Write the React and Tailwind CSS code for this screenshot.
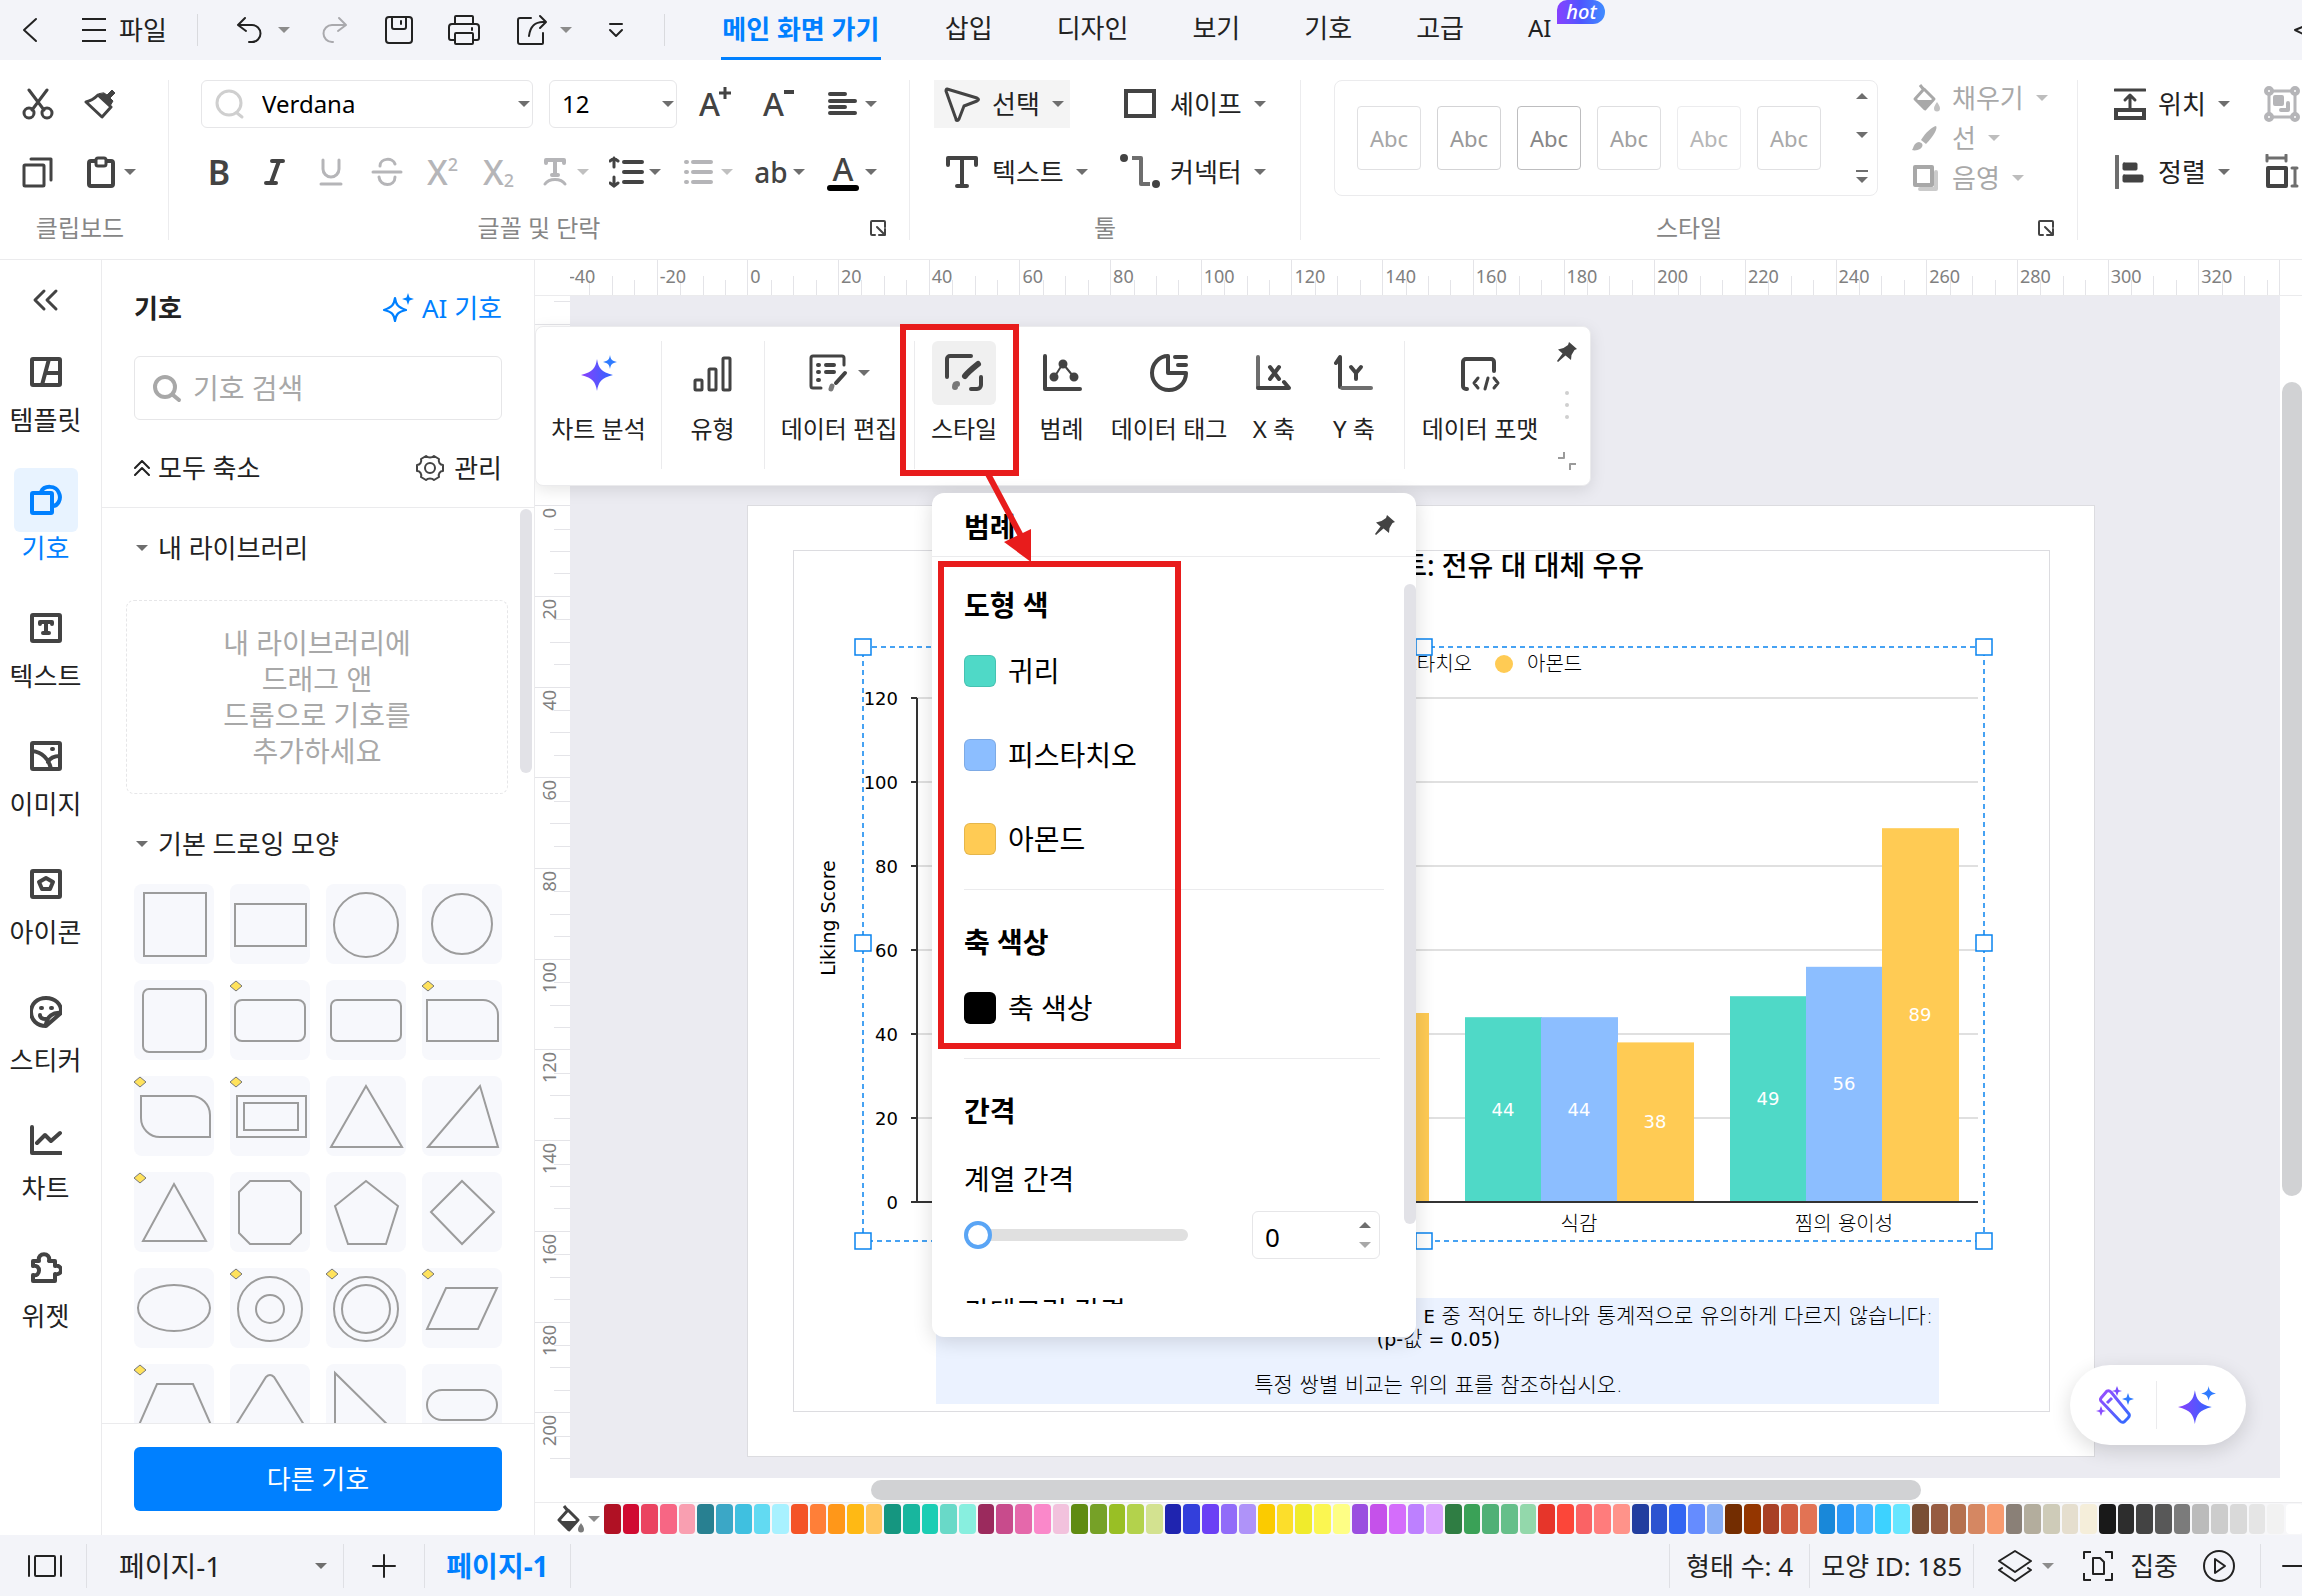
import { useState } from 'react';

const SWATCHES = [
  '#b01124', '#d00a31', '#ea4360', '#f76684', '#f99fb1',
  '#288091', '#3ba7c6', '#3fc0e0', '#62daf2', '#a8f1ff',
  '#f45427', '#ff7f38', '#ff9719', '#ffb914', '#ffc65f',
  '#159680', '#18b69e', '#1bcdb4', '#69d9c8', '#88efdf',
  '#9b2a5d', '#c84b8c', '#e568ab', '#fa88ca', '#f2c2dd',
  '#608b12', '#76a127', '#99bf25', '#b3d24c', '#d3e290',
  '#1f24af', '#333fdb', '#6b40f5', '#916cf9', '#af93f9',
  '#fbcb00', '#fcde2b', '#f0eb2c', '#fbf651', '#fefe85',
  '#9a4ee0', '#c551ea', '#d46dfb', '#bd80ff', '#dba3ff',
  '#2f7d43', '#3aa157', '#50b076', '#66bf8a', '#93d8ab',
  '#e6352a', '#fc4639', '#fa6365', '#ff7c7c', '#ff938a',
  '#223e9f', '#2c54d0', '#3366f2', '#658cff', '#89aef5',
  '#732d01', '#943600', '#a84025', '#d05c3f', '#e27354',
  '#1988d9', '#2b99f6', '#45b0ff', '#3dd2ff', '#67e6ff',
  '#794e35', '#965b41', '#b5714f', '#d58762', '#f79b70',
  '#8a8077', '#b3ad9d', '#cecbb8', '#e5dece', '#f5eeda',
  '#191919', '#2d2d2d', '#434343', '#585858', '#7b7b7b',
  '#bbbbbb', '#cccccc', '#d9d9d9', '#e5e5e5', '#f2f2f2', '#ffffff',
];

const TEAL = '#4fd9c7';
const BLUE = '#8cbeff';
const AMBER = '#ffcb54';

/* ---------- icons ---------- */

function Icon({ size = 32, box = 32, sw = 3, className = '', children }) {
  return (
    <svg
      width={size}
      height={size}
      viewBox={`0 0 ${box} ${box}`}
      fill="none"
      stroke="currentColor"
      strokeWidth={sw}
      strokeLinecap="round"
      strokeLinejoin="round"
      className={`shrink-0 ${className}`}
      aria-hidden="true"
    >
      {children}
    </svg>
  );
}

function Caret({ className = 'text-[#6e6e6e]', up = false }) {
  return (
    <svg width="12" height="8" viewBox="0 0 12 8" className={`shrink-0 ${className}`} aria-hidden="true">
      <path d={up ? 'M6 1L12 7H0Z' : 'M0 1H12L6 7Z'} fill="currentColor" />
    </svg>
  );
}

function Sparkle({ size = 36, id }) {
  return (
    <svg width={size} height={size} viewBox="0 0 36 36" className="shrink-0" aria-hidden="true">
      <defs>
        <linearGradient id={id} x1="0" y1="0.5" x2="1" y2="0.5">
          <stop offset="0" stopColor="#8a3ffc" />
          <stop offset="1" stopColor="#2f66ff" />
        </linearGradient>
      </defs>
      <path d="M16 4C17.5 13 20 17 32 20C20 23 17.5 27 16 36C14.500 27 12 23 0 20C12 17 14.500 13 16 4Z" fill={`url(#${id})`} />
      <path d="M29 0C29.700 4.500 31 6 36 7C31 8 29.700 9.500 29 14C28.300 9.500 27 8 22 7C27 6 28.300 4.500 29 0Z" fill="#2f7bff" />
    </svg>
  );
}

function Pin({ size = 22 }) {
  return (
    <svg width={size} height={size} viewBox="0 0 22 22" className="shrink-0 text-[#434343]" aria-hidden="true">
      <path d="M13 1L21 8L18.500 9L15.500 14L15 19L9.500 14.500L2 21L1 20L6.500 12.500L2 8.500L7.500 7L12 4Z" fill="currentColor" />
    </svg>
  );
}

const Bucket = ({ className = '', size = 28 }) => (
  <svg width={size} height={size} viewBox="0 0 28 28" className={`shrink-0 ${className}`} fill="none" stroke="currentColor" strokeWidth="3" strokeLinejoin="round" aria-hidden="true">
    <path d="M8 1L12 6M12 5L22 15L13 25L3 15Z" />
    <path d="M3 16H22L13 26Z" fill="currentColor" stroke="none" />
    <path d="M25 18C27 21 28 22.500 28 24.500A3 3 0 0 1 22 24.500C22 22.500 23 21 25 18Z" fill="currentColor" stroke="none" opacity="0.7" />
  </svg>
);

const LaunchIcon = () => (
  <button type="button" aria-label="자세히" className="text-[#434343]">
    <Icon size={18} box={18} sw={2}>
      <path d="M6 16H3a1 1 0 0 1-1-1V3a1 1 0 0 1 1-1h12a1 1 0 0 1 1 1v5M8 8l7 7M16 10v6h-6" />
    </Icon>
  </button>
);

/* ---------- title bar ---------- */

const TABS = ['삽입', '디자인', '보기', '기호', '고급'];

function TopBar() {
  return (
    <header className="flex h-[60px] shrink-0 items-center bg-[#f3f4f9] text-[#222]">
      <button type="button" aria-label="뒤로" className="ml-[18px]">
        <Icon size={26} box={26} sw={2}><path d="M18 2L6 13L18 24" /></Icon>
      </button>
      <button type="button" className="ml-[37px] flex items-center gap-3 text-[26px] leading-9">
        <Icon size={26} box={26} sw={2}><path d="M1 2H25M1 13H25M1 24H25" strokeLinecap="butt" /></Icon>
        파일
      </button>
      <div className="ml-[30px] h-8 w-px bg-[#d9dade]" />
      <button type="button" aria-label="실행 취소" className="ml-[38px] flex items-center gap-[14px]">
        <Icon size={28} box={28} sw={2}><path d="M9 2L2 9L10 15M3 9H16a8 8 0 0 1 0 17H13" /></Icon>
        <Caret className="text-[#8c8c8c]" />
      </button>
      <button type="button" aria-label="다시 실행" className="ml-[30px] text-[#a9a9ad]">
        <Icon size={28} box={28} sw={2}><path d="M19 2L26 9L18 15M25 9H12a8 8 0 0 0 0 17H13" /></Icon>
      </button>
      <button type="button" aria-label="저장" className="ml-[36px]">
        <Icon size={30} box={30} sw={2}>
          <rect x="2" y="2" width="26" height="26" rx="3" />
          <path d="M8 2V12a2 2 0 0 0 2 2H20a2 2 0 0 0 2-2V2M17 6V9" />
        </Icon>
      </button>
      <button type="button" aria-label="인쇄" className="ml-[34px]">
        <Icon size={32} box={32} sw={2}>
          <path d="M7 10V3a1 1 0 0 1 1-1H24a1 1 0 0 1 1 1V10M7 26H3a2 2 0 0 1-2-2V13a3 3 0 0 1 3-3H28a3 3 0 0 1 3 3V24a2 2 0 0 1-2 2H25M24 14V16" />
          <rect x="7" y="19" width="18" height="11" rx="1" />
        </Icon>
      </button>
      <button type="button" aria-label="내보내기" className="ml-[36px] flex items-center gap-3">
        <Icon size={32} box={32} sw={2}>
          <path d="M15 4H4a2 2 0 0 0-2 2V28a2 2 0 0 0 2 2H26a1 1 0 0 0 1-1V19M24 2L30 8L24 14M29 8C19 7 14 13 13 22" />
        </Icon>
        <Caret className="text-[#8c8c8c]" />
      </button>
      <button type="button" aria-label="더 보기" className="ml-[35px]">
        <Icon size={18} box={18} sw={2}><path d="M3 3H15M3 9L9 15L15 9" /></Icon>
      </button>
      <div className="ml-[39px] h-8 w-px bg-[#d9dade]" />
      <nav className="ml-14 flex h-full items-stretch gap-16 text-[26px] leading-9 whitespace-nowrap">
        <button type="button" className="flex min-w-40 items-center justify-center border-b-3 border-[#0080ff] pt-px font-bold text-[#0080ff]">메인 화면 가기</button>
        {TABS.map((t) => (
          <button key={t} type="button" className="pb-1">{t}</button>
        ))}
        <button type="button" className="flex items-start pb-1">
          <span className="self-center text-[24px]">AI</span>
          <span className="ml-[6px] h-6 w-12 rounded-tl-[10px] rounded-r-xl bg-gradient-to-r from-[#8640ff] via-[#4d55ff] to-[#3f8cff] text-center text-[20px] leading-6 font-medium text-white italic">hot</span>
        </button>
      </nav>
      <button type="button" aria-label="펼치기" className="ml-auto w-2 overflow-hidden">
        <Icon size={16} box={16} sw={2}><path d="M11 4L1 8L11 13" /></Icon>
      </button>
    </header>
  );
}

/* ---------- ribbon ---------- */

function RibbonGroup({ label, launcher = false, className, children }) {
  return (
    <section className={`flex flex-col pt-5 ${className}`}>
      {children}
      <div className="mt-4 flex h-8 items-center px-[22px]">
        {launcher && <span className="w-[18px]" />}
        <span className="flex-1 text-center text-[24px] leading-8 whitespace-nowrap text-[#868686]">{label}</span>
        {launcher && <LaunchIcon />}
      </div>
    </section>
  );
}

const Sep = () => <div className="mt-5 h-40 w-px shrink-0 bg-[#ececee]" />;

function DropIcon({ label, muted = false, children }) {
  return (
    <button type="button" aria-label={label} className={muted ? 'flex items-center gap-1.5 text-[#b5b5b8]' : 'flex items-center gap-1.5'}>
      <span className="flex w-8 justify-center">{children}</span>
      <Caret className={muted ? 'text-[#c0c0c0]' : 'text-[#6e6e6e]'} />
    </button>
  );
}

function FontGroup() {
  return (
    <RibbonGroup label="글꼴 및 단락" launcher className="w-[740px] shrink-0">
      <div className="flex h-12 items-center pl-8">
        <div className="relative flex h-12 w-[332px] items-center rounded-md border border-[#e6e6e8] pl-3">
          <Icon size={32} box={32} sw={3} className="text-[#cfcfcf]"><circle cx="15" cy="15" r="12" /><path d="M23 25L28 29" /></Icon>
          <select aria-label="글꼴" className="absolute inset-0 w-full appearance-none bg-transparent pl-[60px] text-[24px] text-black" defaultValue="Verdana">
            <option>Verdana</option>
          </select>
          <Caret className="pointer-events-none absolute right-0.5 text-[#6e6e6e]" />
        </div>
        <div className="relative ml-4 flex h-12 w-32 items-center rounded-md border border-[#e6e6e8]">
          <select aria-label="글꼴 크기" className="absolute inset-0 w-full appearance-none bg-transparent pl-3 text-[24px] text-black" defaultValue="12">
            <option>12</option>
          </select>
          <Caret className="pointer-events-none absolute right-0.5 text-[#6e6e6e]" />
        </div>
        <button type="button" aria-label="글꼴 크게" className="ml-[22px] flex w-8 items-start text-[32px] leading-9 font-medium">
          A<Icon size={14} box={14} sw={3} className="-ml-0.5"><path d="M7 1V13M1 7H13" strokeLinecap="butt" /></Icon>
        </button>
        <button type="button" aria-label="글꼴 작게" className="ml-8 flex w-8 items-start text-[32px] leading-9 font-medium">
          A<Icon size={12} box={12} sw={4} className="-ml-px"><path d="M1 6H11" strokeLinecap="butt" /></Icon>
        </button>
        <div className="ml-8 flex">
          <DropIcon label="맞춤">
            <Icon size={32} sw={4}><path d="M3 6H18M3 13H28M3 19H18M3 25H28" /></Icon>
          </DropIcon>
        </div>
      </div>
      <div className="mt-5 flex h-12 items-center pl-[34px]">
        <div className="flex gap-6 text-center text-[34px] leading-10">
          <button type="button" className="w-8 font-semibold">B</button>
          <button type="button" aria-label="기울임꼴" className="w-8"><Icon sw={4}><path d="M13 5H24M7 27H17M20 5L12 27" /></Icon></button>
          <button type="button" aria-label="밑줄" className="w-8 text-[#b5b5b8]"><Icon sw={3}><path d="M8 4V13a8 8 0 0 0 16 0V4M6 28H26" /></Icon></button>
          <button type="button" aria-label="취소선" className="w-8 text-[#b5b5b8]"><Icon sw={3}><path d="M24 8C22 1 9 2 9 10M24 21C24 31 9 31 8 21M2 16H30" /></Icon></button>
          <button type="button" aria-label="위 첨자" className="flex w-8 font-medium text-[#b5b5b8]">X<span className="text-[18px] leading-6">2</span></button>
          <button type="button" aria-label="아래 첨자" className="flex w-8 items-end font-medium text-[#b5b5b8]">X<span className="text-[18px] leading-6">2</span></button>
        </div>
        <div className="ml-6 flex gap-[22px]">
          <DropIcon label="텍스트 위치" muted>
            <Icon sw={4}><path d="M7 7V4H25V7M16 4V18M13 19H19" /><path d="M6 28C10 22 22 22 26 28" strokeWidth="3" /></Icon>
          </DropIcon>
          <DropIcon label="줄 간격">
            <svg width="36" height="32" viewBox="0 0 36 32" className="shrink-0" fill="none" stroke="currentColor" strokeLinecap="round">
              <path d="M15 6H33M15 16H33M15 26H33" strokeWidth="4" />
              <path d="M5 2V11M5 21V30M1 5L5 2L9 5M1 27L5 30L9 27" strokeWidth="3" />
            </svg>
          </DropIcon>
          <DropIcon label="목록" muted>
            <Icon sw={4}><path d="M10 6H28M10 16H28M10 26H28" /><path d="M3 6h1M3 16h1M3 26h1" /></Icon>
          </DropIcon>
          <DropIcon label="대소문자"><span className="text-[28px] leading-8 font-medium">ab</span></DropIcon>
          <DropIcon label="글꼴 색">
            <span className="flex flex-col items-center">
              <span className="text-[32px] leading-8 font-medium">A</span>
              <span className="h-1.5 w-8 rounded-sm bg-black" />
            </span>
          </DropIcon>
        </div>
      </div>
    </RibbonGroup>
  );
}

const ABC_TONES = [
  'border-[#e0e0e2] text-[#a6a6a6]',
  'border-[#d3d3d5] text-[#989898]',
  'border-[#bdbdbf] text-[#868686]',
  'border-[#dedee0] text-[#a0a0a0]',
  'border-[#ececee] text-[#b6b6b6]',
  'border-[#e0e0e2] text-[#a9a9a9]',
];

function Ribbon() {
  return (
    <div className="flex h-[200px] shrink-0 overflow-hidden border-b border-[#ebebed] bg-white text-[#434343]">
      <RibbonGroup label="클립보드" className="w-[168px] shrink-0 pr-2">
        <div className="flex h-12 items-center gap-[30px] pl-[22px]">
          <button type="button" aria-label="잘라내기">
            <Icon><path d="M7 2L22 22M25 2L10 22" /><circle cx="7" cy="25" r="5" /><circle cx="25" cy="25" r="5" /></Icon>
          </button>
          <button type="button" aria-label="서식 복사">
            <Icon><path d="M14 7L27 19L18 29L2 14C6 13 10 11 14 7Z" /><path d="M15 6L26 18L29 13L26 10L31 5L28 2L23 7L20 5Z" fill="currentColor" strokeWidth="1" /></Icon>
          </button>
        </div>
        <div className="mt-5 flex h-12 items-center gap-[30px] pl-[22px]">
          <button type="button" aria-label="복사">
            <Icon><path d="M9 3H29V24" /><rect x="2" y="9" width="20" height="21" rx="1" /></Icon>
          </button>
          <button type="button" aria-label="붙여넣기" className="flex items-center gap-2">
            <Icon sw={4}><rect x="5" y="5" width="24" height="25" rx="2" /><rect x="12" y="2" width="10" height="8" rx="2" fill="white" strokeWidth="3" /></Icon>
            <Caret />
          </button>
        </div>
      </RibbonGroup>
      <Sep />
      <FontGroup />
      <Sep />
      <RibbonGroup label="툴" className="w-[390px] shrink-0">
        <div className="grid grid-cols-[186px_auto] gap-y-5 pl-6 text-[26px] whitespace-nowrap text-[#222]">
          <button type="button" className="flex h-12 w-[136px] items-center bg-[#f4f4f4] pl-2.5">
            <Icon size={36} box={36} className="text-[#434343]"><path d="M3 3L33 12C35 13 35 14 33 15L20 20L15 33C14 35 12 35 12 33L2 5C2 4 2 3 3 3Z" /></Icon>
            <span className="mx-3">선택</span><Caret />
          </button>
          <button type="button" className="flex h-12 items-center">
            <Icon size={40} box={40} sw={4} className="text-[#434343]"><rect x="6" y="7" width="28" height="25" strokeLinejoin="miter" /></Icon>
            <span className="ml-2.5 mr-3">셰이프</span><Caret />
          </button>
          <button type="button" className="flex h-12 items-center pl-2.5">
            <Icon size={36} box={36} sw={4} className="text-[#434343]"><path d="M4 11V4H32V11M18 4V32M13 32H23" /></Icon>
            <span className="mx-3">텍스트</span><Caret />
          </button>
          <button type="button" className="flex h-12 items-center">
            <Icon size={40} box={40} sw={4} className="text-[#6e6e6e]">
              <path d="M12 6H21V32H30" strokeLinecap="butt" /><circle cx="4" cy="6" r="3" fill="#434343" stroke="#434343" strokeWidth="2" /><circle cx="36" cy="32" r="3" fill="#434343" stroke="#434343" strokeWidth="2" />
            </Icon>
            <span className="ml-2.5 mr-3">커넥터</span><Caret />
          </button>
        </div>
      </RibbonGroup>
      <Sep />
      <RibbonGroup label="스타일" launcher className="w-[776px] shrink-0">
        <div className="flex h-[116px] pl-[33px] whitespace-nowrap">
          <div className="flex w-[544px] items-center gap-4 rounded-lg border border-[#ebebed] pl-[22px]">
            {ABC_TONES.map((tone, i) => (
              <button key={i} type="button" className={`h-16 w-16 shrink-0 rounded border text-[22px] leading-8 ${tone}`}>Abc</button>
            ))}
            <div className="ml-auto flex flex-col items-center gap-[31px] pr-[9px]">
              <button type="button" aria-label="위로"><Caret up /></button>
              <button type="button" aria-label="아래로"><Caret /></button>
              <button type="button" aria-label="펼치기" className="flex flex-col items-center gap-1"><span className="h-0.5 w-3 bg-[#6e6e6e]" /><Caret /></button>
            </div>
          </div>
          <div className="ml-[34px] flex flex-col justify-between text-[26px] leading-9 text-[#a8a8a8]">
            <button type="button" className="flex h-9 items-center gap-3"><Bucket /><span>채우기</span><Caret className="text-[#bdbdbd]" /></button>
            <button type="button" className="flex h-9 items-center gap-3">
              <svg width="28" height="28" viewBox="0 0 28 28" fill="currentColor"><path d="M24 2C26 4 22 12 14 20L9 16C14 8 20 3 24 2ZM7 18C11 19 12 22 8 25C6 26 3 27 0 26C2 24 1 19 7 18Z" opacity="0.9" /></svg>
              <span>선</span><Caret className="text-[#bdbdbd]" />
            </button>
            <button type="button" className="flex h-9 items-center gap-3">
              <Icon size={28} box={28} sw={4}><path d="M24 8V25H8" opacity="0.6" /><rect x="3" y="3" width="17" height="18" fill="white" /></Icon>
              <span>음영</span><Caret className="text-[#bdbdbd]" />
            </button>
          </div>
        </div>
      </RibbonGroup>
      <Sep />
      <section className="flex shrink-0 flex-col gap-5 pt-5 pl-9 text-[26px] whitespace-nowrap text-[#222]">
        <div className="flex h-12 items-center">
          <button type="button" className="flex items-center">
            <Icon className="text-[#434343]"><path d="M1 2H31" /><path d="M16 8V20M11 12L16 7L21 12" /><rect x="2" y="22" width="28" height="8" strokeWidth="4" strokeLinejoin="miter" /></Icon>
            <span className="mx-3">위치</span><Caret />
          </button>
          <button type="button" aria-label="그룹" className="ml-[34px] text-[#b5b5b8]">
            <Icon size={36} box={36} sw={4}>
              <rect x="5" y="5" width="26" height="26" strokeWidth="3" /><circle cx="5" cy="5" r="3" fill="white" /><circle cx="31" cy="5" r="3" fill="white" /><circle cx="5" cy="31" r="3" fill="white" /><circle cx="31" cy="31" r="3" fill="white" />
              <rect x="11" y="11" width="7" height="7" fill="currentColor" /><path d="M24 17V24H17" />
            </Icon>
          </button>
        </div>
        <div className="flex h-12 items-center">
          <button type="button" className="flex items-center">
            <Icon size={34} box={34} className="text-[#434343]"><path d="M3 1V33" stroke="#6e6e6e" strokeWidth="4" /><rect x="9" y="8" width="14" height="7" rx="1" fill="currentColor" strokeWidth="1" /><rect x="9" y="20" width="20" height="7" rx="1" fill="currentColor" strokeWidth="1" /></Icon>
            <span className="mr-3 ml-2.5">정렬</span><Caret />
          </button>
          <button type="button" aria-label="크기" className="ml-[34px] text-[#434343]">
            <Icon size={36} box={36} sw={4}><rect x="4" y="14" width="18" height="18" /><path d="M3 4H22M3 1V7M22 1V7M31 14V32M28 14H33M28 32H33" stroke="#6e6e6e" strokeWidth="3" /></Icon>
          </button>
        </div>
      </section>
    </div>
  );
}

/* ---------- left rail ---------- */

const RAIL = [
  { label: '템플릿', icon: <><rect x="2" y="3" width="28" height="26" rx="1" /><path d="M19 3L12 29M16 17H30" /></> },
  { label: '기호', active: true, icon: <><path d="M11 8C14 1 26 1 29 9C32 16 27 22 23 22" /><rect x="2" y="9" width="20" height="20" rx="1" /></> },
  { label: '텍스트', icon: <><rect x="2" y="3" width="28" height="26" rx="1" /><path d="M10 12V10H22V12M16 10V21M13 21H19" /></> },
  { label: '이미지', icon: <><rect x="2" y="3" width="28" height="26" rx="1" /><path d="M2 11C12 12 19 19 21 29M18 22C20 18 25 16 30 16M22 9h1" /></> },
  { label: '아이콘', icon: <><rect x="2" y="3" width="28" height="26" rx="1" /><path d="M16 10L23 14L20 21H12L9 14Z" /></> },
  { label: '스티커', icon: <><path d="M31 17C32 8 25 2 16 2S1 8 1 16S7 30 16 30L31 17C24 16 16 20 16 30M16 23C12 23 10 22 10 19M11 12h1M21 12h1" /></> },
  { label: '차트', icon: <path d="M2 3V29H31M7 19L15 11L21 17L30 9" /> },
  { label: '위젯', icon: <path d="M3 9H9C7 0 21 0 19 9H25V14C33 12 33 24 25 22V29H3V23C11 25 11 12 3 14Z" /> },
];

function Rail() {
  return (
    <nav className="flex w-[102px] shrink-0 flex-col items-center border-r border-[#ebebed] bg-white pr-[10px] text-[#434343]">
      <button type="button" aria-label="접기" className="mt-6">
        <Icon size={32}><path d="M14 7L5 16L14 25M26 7L17 16L26 25" /></Icon>
      </button>
      <div className="mt-6 flex flex-col gap-4">
        {RAIL.map((r) => (
          <button key={r.label} type="button" className="flex h-28 w-[90px] flex-col items-center text-[26px] leading-8">
            <span className={r.active ? 'flex h-16 w-16 items-center justify-center rounded-md bg-[#e8f3ff] text-[#0080ff]' : 'flex h-16 w-16 items-center justify-center'}>
              <Icon size={32} sw={4}>{r.icon}</Icon>
            </span>
            <span className={r.active ? 'text-[#0080ff]' : 'text-[#222]'}>{r.label}</span>
          </button>
        ))}
      </div>
    </nav>
  );
}

/* ---------- symbol panel ---------- */

const SHAPES = [
  { d: <rect x="10" y="9" width="62" height="63" /> },
  { d: <rect x="5" y="20" width="71" height="42" /> },
  { d: <circle cx="40" cy="41" r="32" /> },
  { d: <circle cx="40" cy="40" r="30" /> },
  { d: <rect x="9" y="9" width="63" height="63" rx="6" /> },
  { d: <rect x="5" y="20" width="70" height="41" rx="7" />, tag: true },
  { d: <rect x="5" y="20" width="70" height="41" rx="6" /> },
  { d: <path d="M5 20H61A15 15 0 0 1 76 35V61H5Z" />, tag: true },
  { d: <path d="M7 20H57A19 19 0 0 1 76 39V61H26A19 19 0 0 1 7 42Z" />, tag: true },
  { d: <><rect x="7" y="20" width="69" height="41" /><rect x="14" y="27" width="54" height="27" /></>, tag: true },
  { d: <path d="M40 10L76 71H5Z" /> },
  { d: <path d="M58 10L76 71H6Z" /> },
  { d: <path d="M40 12L72 69H9Z" />, tag: true },
  { d: <path d="M20 9H60L71 20V61L60 72H20L9 61V20Z" /> },
  { d: <path d="M40 9L72 34L60 72H22L9 34Z" /> },
  { d: <path d="M40 9L72 40L40 72L9 40Z" /> },
  { d: <ellipse cx="40" cy="40" rx="36" ry="23" /> },
  { d: <><circle cx="40" cy="41" r="32" /><circle cx="40" cy="41" r="14" /></>, tag: true },
  { d: <><circle cx="40" cy="41" r="32" /><circle cx="40" cy="41" r="24" /></>, tag: true },
  { d: <path d="M24 20H75L56 61H5Z" />, tag: true },
  { d: <path d="M23 20H59L77 61H5Z" />, tag: true },
  { d: <path d="M36 13Q40 9 44 13L76 64H4Z" /> },
  { d: <path d="M9 9V72H73Z" /> },
  { d: <rect x="5" y="26" width="70" height="30" rx="15" /> },
];

function SectionTitle({ children }) {
  return (
    <button type="button" className="flex items-center gap-2.5 pl-[34px] text-[26px] leading-8 text-[#222]">
      <Caret />
      {children}
    </button>
  );
}

function SymbolPanel() {
  return (
    <aside className="flex w-[433px] shrink-0 flex-col border-r border-[#ebebed] bg-white text-[#222]">
      <div className="flex h-[248px] shrink-0 flex-col border-b border-[#ebebed] pr-8 pl-8">
        <div className="mt-[30px] flex h-9 items-center justify-between">
          <h2 className="text-[26px] font-bold">기호</h2>
          <button type="button" className="flex items-center gap-2 text-[26px] text-[#0080ff]">
            <Icon size={32} sw={2.2}>
              <path d="M13 6C14 13 16 15 24 18C16 20 14 22 13 29C12 22 10 20 2 18C10 15 12 13 13 6Z" />
              <path d="M26 1L27.500 5.500L32 7L27.500 8.500L26 13L24.500 8.500L20 7L24.500 5.500Z" fill="currentColor" stroke="none" />
            </Icon>
            <span>AI 기호</span>
          </button>
        </div>
        <label className="mt-[30px] flex h-16 shrink-0 items-center gap-2.5 rounded-md border border-[#e6e6e8] pl-4">
          <Icon size={32} sw={4} className="text-[#a8a8a8]"><circle cx="14" cy="15" r="10" /><path d="M22 23L28 28" /></Icon>
          <input type="text" aria-label="기호 검색" placeholder="기호 검색" className="w-full bg-transparent text-[28px] outline-none placeholder:text-[#a8a8a8]" />
        </label>
        <div className="mt-[30px] flex h-9 items-center justify-between text-[26px]">
          <button type="button" className="flex items-center gap-2">
            <Icon size={16} box={16} sw={2}><path d="M1 8L8 1L15 8M1 15L8 8L15 15" /></Icon>
            모두 축소
          </button>
          <button type="button" className="flex items-center gap-2.5">
            <Icon size={28} box={28} sw={2} className="text-[#434343]">
              <path d="M10 2C12 4 16 4 18 2L23 5C22 8 24 11 27 11V17C24 17 22 20 23 23L18 26C16 24 12 24 10 26L5 23C6 20 4 17 1 17V11C4 11 6 8 5 5Z" /><circle cx="14" cy="14" r="5" />
            </Icon>
            관리
          </button>
        </div>
      </div>
      <div className="relative min-h-0 flex-1 overflow-hidden pt-6">
        <SectionTitle>내 라이브러리</SectionTitle>
        <p className="mt-9 mr-[26px] ml-6 rounded-lg border border-dashed border-[#e6e6e8] py-6 text-center text-[28px] leading-9 text-[#a8a8a8]">
          내 라이브러리에<br />드래그 앤<br />드롭으로 기호를<br />추가하세요
        </p>
        <div className="mt-[34px]">
          <SectionTitle>기본 드로잉 모양</SectionTitle>
        </div>
        <div className="mt-6 grid grid-cols-4 gap-4 pr-8 pl-8">
          {SHAPES.map((s, i) => (
            <button key={i} type="button" aria-label={`모양 ${i + 1}`} className="aspect-square rounded-lg bg-[#f7f8fc]">
              <svg viewBox="0 0 80 80" className="w-full" fill="none" stroke="#9c9c9c" strokeWidth="2">
                {s.d}
                {s.tag && <path d="M6 1L12 6L6 11L0 6Z" fill="#ffe25c" stroke="#777" strokeWidth="1" />}
              </svg>
            </button>
          ))}
        </div>
        <div className="absolute top-px right-0.5 h-[264px] w-3 rounded-full bg-[#e2e2e7]" />
      </div>
      <div className="h-28 shrink-0 border-t border-[#ebebed] px-8 pt-[23px]">
        <button type="button" className="h-16 w-full rounded-md bg-[#0080ff] text-[26px] text-white">다른 기호</button>
      </div>
    </aside>
  );
}

/* ---------- rulers ---------- */

const H_MARKS = Array.from({ length: 19 }, (_, i) => i * 20 - 40);
const V_MARKS = Array.from({ length: 14 }, (_, i) => i * 20 - 60);

function TopRuler() {
  return (
    <div className="flex h-9 shrink-0 border-b border-[#ebebed] bg-white pl-[35px]">
      <div className="mr-[22px] min-w-0 flex-1 overflow-hidden border-r border-[#e4e4e8]">
        <div className="-ml-1 grid h-9 w-[1723px] grid-cols-[repeat(19,minmax(0,1fr))]">
          {H_MARKS.map((m) => (
            <div key={m} className="relative grid grid-cols-4 items-end border-l border-[#e4e4e8]">
              <span className="absolute top-1 left-0.5 text-[18px] leading-6 text-[#808080]">{m}</span>
              <i className="h-0" />
              <i className="h-4 border-l border-[#e4e4e8]" />
              <i className="h-5 border-l border-[#e4e4e8]" />
              <i className="h-4 border-l border-[#e4e4e8]" />
            </div>
          ))}
        </div>
      </div>
    </div>
  );
}

function SideRuler() {
  return (
    <div className="w-[35px] shrink-0 overflow-hidden bg-white">
      <div className="-mt-[63px] grid h-[1270px] grid-rows-[repeat(14,minmax(0,1fr))]">
        {V_MARKS.map((m) => (
          <div key={m} className="relative grid grid-rows-4 justify-items-end border-t border-[#e4e4e8]">
            {m > -60 && <span className="absolute top-0.5 left-0.5 rotate-180 text-[18px] leading-6 text-[#808080] [writing-mode:vertical-rl]">{m}</span>}
            <i />
            <i className="w-4 border-t border-[#e4e4e8]" />
            <i className="w-5 border-t border-[#e4e4e8]" />
            <i className="w-4 border-t border-[#e4e4e8]" />
          </div>
        ))}
      </div>
    </div>
  );
}

/* ---------- chart on the page ---------- */

// left edge of each bar on the drawing, with its value
const BARS = [
  { x: 644, v: 45, fill: AMBER, quiet: true },
  { x: 757, v: 44, fill: TEAL },
  { x: 833, v: 44, fill: BLUE },
  { x: 909, v: 38, fill: AMBER },
  { x: 1022, v: 49, fill: TEAL },
  { x: 1098, v: 56, fill: BLUE },
  { x: 1174, v: 89, fill: AMBER },
];

const BASE = 643;
const UNIT = 4.2;
const HANDLES = [[155, 88], [716, 88], [1276, 88], [155, 384], [1276, 384], [155, 682], [716, 682], [1276, 682]];

function Chart() {
  return (
    <svg viewBox="0 0 1300 720" className="absolute top-[53px] -left-10 h-[720px] w-[1300px] font-['DejaVu_Sans','Noto_Sans_CJK_KR',sans-serif]" fontSize="18">
      {[0, 20, 40, 60, 80, 100, 120].map((t) => (
        <g key={t}>
          <path d={`M209 ${BASE - t * UNIT}H1270`} stroke="#e0e0e0" strokeWidth="2" />
          <path d={`M203 ${BASE - t * UNIT}H209`} stroke="#333" strokeWidth="2" />
          <text x="190" y={BASE + 7 - t * UNIT} textAnchor="end">{t}</text>
        </g>
      ))}
      {BARS.map((b) => (
        <g key={b.x}>
          <rect x={b.x} y={BASE - b.v * UNIT} width="77" height={b.v * UNIT} fill={b.fill} />
          {!b.quiet && <text x={b.x + 38} y={BASE + 6 - (b.v * UNIT) / 2} textAnchor="middle" fill="white">{b.v}</text>}
        </g>
      ))}
      <path d="M209 139V643H1270" fill="none" stroke="#333" strokeWidth="2" />
      <text transform="translate(127 359) rotate(-90)" textAnchor="middle" fontSize="19">Liking Score</text>
      <g fontSize="20" fontWeight="300">
        <text x="764" y="112" textAnchor="end">피스타치오</text>
        <text x="819" y="112">아몬드</text>
        <text x="871" y="672" textAnchor="middle">식감</text>
        <text x="1136" y="672" textAnchor="middle">찜의 용이성</text>
      </g>
      <circle cx="796" cy="105" r="9" fill={AMBER} />
      <rect x="155" y="88" width="1121" height="594" fill="none" stroke="#0a84ef" strokeWidth="1.500" strokeDasharray="5 4" />
      {HANDLES.map(([x, y]) => (
        <rect key={`${x}-${y}`} x={x - 8} y={y - 8} width="16" height="16" fill="white" stroke="#0a84ef" strokeWidth="1.500" />
      ))}
    </svg>
  );
}

function Page() {
  return (
    <article className="absolute top-[209px] left-[177px] h-[952px] w-[1348px] border border-[#dcdce0] bg-white text-black">
      <div className="absolute top-[44px] left-[45px] h-[862px] w-[1257px] border border-[#dcdce0]" />
      <h1 className="absolute top-[41px] right-[450px] text-[28px] leading-9 font-medium whitespace-nowrap">트: 전유 대 대체 우유</h1>
      <Chart />
      <div className="absolute top-[792px] left-[188px] h-[106px] w-[1003px] bg-[#ebf2ff] pt-[7px] pr-1.5 text-center font-['DejaVu_Sans','Noto_Sans_CJK_KR',sans-serif] text-[21px] leading-[23px] font-light whitespace-nowrap">
        <p className="text-right"><b className="text-[18px]">E</b> 중 적어도 하나와 통계적으로 유의하게 다르지 않습니다:</p>
        <p className="pl-2"><span className="text-[19px] font-medium">(p-</span>값<span className="text-[19px] font-medium"> = 0.05)</span></p>
        <p className="mt-[23px] pl-2">특정 쌍별 비교는 위의 표를 참조하십시오.</p>
      </div>
    </article>
  );
}

/* ---------- floating chart toolbar ---------- */

function Tool({ label, className, active = false, drop = false, children }) {
  return (
    <button type="button" className={`flex h-32 shrink-0 flex-col items-center text-[24px] leading-8 whitespace-nowrap text-[#222] ${className}`}>
      <span className={active ? 'flex h-16 w-16 items-center justify-center rounded-md bg-[#f0f0f0] text-[#434343]' : 'flex h-16 items-center justify-center gap-2.5 text-[#434343]'}>
        {children}
        {drop && <Caret />}
      </span>
      <span className="mt-2">{label}</span>
    </button>
  );
}

const ToolSep = () => <div className="-mr-px h-32 w-px shrink-0 bg-[#ebebed]" />;

function ChartToolbar() {
  return (
    <div className="absolute top-[66px] left-0 flex h-[160px] w-[1056px] rounded-lg border border-[#ebebed] bg-white pt-[14px] shadow-[0_4px_16px_rgba(0,0,0,0.1)]">
      <Tool label="차트 분석" className="w-[125px]"><Sparkle id="spark-a" /></Tool>
      <ToolSep />
      <Tool label="유형" className="w-[103px]">
        <Icon size={40} box={40}><rect x="2" y="27" width="7" height="10" rx="1" /><rect x="16" y="16" width="7" height="21" rx="1" /><rect x="30" y="5" width="7" height="32" rx="1" /></Icon>
      </Tool>
      <ToolSep />
      <Tool label="데이터 편집" className="w-[150px]" drop>
        <Icon size={40} box={40}>
          <path d="M36 12V5a2 2 0 0 0-2-2H5a2 2 0 0 0-2 2V33a2 2 0 0 0 2 2H13" /><path d="M10 12h1M10 19h1M10 27h1M18 12H26M18 19H26" strokeWidth="4" /><path d="M37 20L28 30" strokeWidth="4" /><path d="M23 36L24 33" strokeWidth="5" opacity="0.7" />
        </Icon>
      </Tool>
      <ToolSep />
      <Tool label="스타일" className="w-[100px]" active>
        <Icon size={40} box={40}>
          <path d="M3 24V6a3 3 0 0 1 3-3H27M37 24V32a4 4 0 0 1-4 4H27" strokeWidth="4" /><path d="M34 11C29 15 24 19 21 23" strokeWidth="6" /><path d="M11 34C11 31 12 31 13 31" strokeWidth="6" opacity="0.7" />
        </Icon>
      </Tool>
      <Tool label="범례" className="w-[95px]">
        <Icon size={40} box={40} sw={4}><path d="M3 3V36H38" /><circle cx="21" cy="11" r="3" fill="currentColor" strokeWidth="3" /><circle cx="12" cy="24" r="3" fill="currentColor" strokeWidth="3" /><circle cx="32" cy="24" r="3" fill="currentColor" strokeWidth="3" /><path d="M20 12L13 23M22 12L31 23" strokeWidth="2" /></Icon>
      </Tool>
      <Tool label="데이터 태그" className="w-[120px]">
        <Icon size={40} box={40} sw={4}><path d="M19 3V20H37C37 30 29 37 20 37C10 37 3 29 3 20C3 11 10 3 19 3ZM26 4H37M29 12H37" /></Icon>
      </Tool>
      <Tool label="X 축" className="w-[90px]">
        <Icon size={40} box={40} sw={4}><path d="M4 4V34" stroke="#6e6e6e" /><path d="M4 35H35L30 29" /><path d="M16 14L25 26M25 14L16 26" /></Icon>
      </Tool>
      <Tool label="Y 축" className="w-[70px]">
        <Icon size={40} box={40} sw={4}><path d="M2 10L6 4V34" /><path d="M8 35H37" stroke="#6e6e6e" /><path d="M17 14L22 20L27 14M22 20V26" /></Icon>
      </Tool>
      <div className="w-[15px] shrink-0" />
      <ToolSep />
      <Tool label="데이터 포맷" className="w-[152px]">
        <Icon size={40} box={40} sw={4}><path d="M34 18V9a3 3 0 0 0-3-3H6a3 3 0 0 0-3 3V33a3 3 0 0 0 3 3H7" /><path d="M18 25L14 30L18 35M28 25L25 36M34 25L38 30L34 35" strokeWidth="3" /></Icon>
      </Tool>
      <div className="flex h-32 flex-col items-center text-[#9a9a9a]">
        <button type="button" aria-label="고정"><Pin /></button>
        <div className="mt-7 flex flex-col gap-2">
          <span className="h-1 w-1 rounded-full bg-[#cfcfcf]" /><span className="h-1 w-1 rounded-full bg-[#cfcfcf]" /><span className="h-1 w-1 rounded-full bg-[#cfcfcf]" />
        </div>
        <Icon size={20} box={20} sw={2} className="mt-8"><path d="M1 7H7V1M13 19V13H19" strokeLinecap="butt" /></Icon>
      </div>
    </div>
  );
}

/* ---------- legend popup ---------- */

const SERIES = [
  { name: '귀리', color: TEAL },
  { name: '피스타치오', color: BLUE },
  { name: '아몬드', color: AMBER },
];

function ColorRow({ name, color }) {
  return (
    <button type="button" className="flex h-8 items-center gap-3">
      <span className="h-8 w-8 rounded-md border border-black/10" style={{ backgroundColor: color }} />
      {name}
    </button>
  );
}

function StylePopup() {
  const [gap, setGap] = useState(0);
  return (
    <div className="absolute top-[233px] left-[397px] h-[844px] w-[484px] rounded-xl bg-white text-[28px] leading-8 text-black shadow-[0_4px_20px_rgba(0,0,0,0.14)]">
      <div className="flex h-16 items-center justify-between border-b border-[#ebebed] pr-5 pl-8">
        <h3 className="mt-1 font-bold">범례</h3>
        <button type="button" aria-label="고정"><Pin /></button>
      </div>
      <div className="h-[747px] overflow-hidden pl-8">
        <h4 className="mt-8 font-bold">도형 색</h4>
        <div className="mt-[34px] flex flex-col gap-[52px]">
          {SERIES.map((s) => <ColorRow key={s.name} {...s} />)}
        </div>
        <div className="mt-[34px] mr-8 h-px bg-[#ebebed]" />
        <h4 className="mt-9 font-bold">축 색상</h4>
        <div className="mt-[34px]"><ColorRow name="축 색상" color="#000000" /></div>
        <div className="mt-[34px] mr-9 h-px bg-[#ebebed]" />
        <h4 className="mt-9 font-bold">간격</h4>
        <label htmlFor="series-gap" className="mt-9 block">계열 간격</label>
        <div className="mt-4 mr-9 flex h-12 items-center justify-between">
          <input
            id="series-gap"
            type="range"
            min="0"
            max="100"
            value={gap}
            onChange={(e) => setGap(Number(e.target.value))}
            className="h-3 w-56 appearance-none rounded-full bg-[#e0e0e0] [&::-webkit-slider-thumb]:h-7 [&::-webkit-slider-thumb]:w-7 [&::-webkit-slider-thumb]:appearance-none [&::-webkit-slider-thumb]:rounded-full [&::-webkit-slider-thumb]:border-4 [&::-webkit-slider-thumb]:border-[#5aa5f5] [&::-webkit-slider-thumb]:bg-white"
          />
          <div className="flex h-12 w-32 items-center rounded-md border border-[#e6e6e8] pr-2">
            <input
              type="text"
              aria-label="계열 간격 값"
              value={gap}
              onChange={(e) => setGap(Number(e.target.value) || 0)}
              className="h-full w-full min-w-0 bg-transparent pt-1 pl-3 text-[26px] outline-none"
            />
            <div className="flex flex-col gap-3">
              <button type="button" aria-label="늘리기" className="flex" onClick={() => setGap(gap + 1)}><Caret up /></button>
              <button type="button" aria-label="줄이기" className="flex" onClick={() => setGap(Math.max(0, gap - 1))}><Caret className="text-[#a8a8a8]" /></button>
            </div>
          </div>
        </div>
        <p className="mt-9">카테고리 간격</p>
      </div>
      <div className="absolute top-[91px] right-0 h-[640px] w-3 rounded-full bg-[#e2e2e7]" />
    </div>
  );
}

// red call-out frames and the arrow that joins them
function Callouts() {
  return (
    <>
      <div className="pointer-events-none absolute top-16 left-[365px] h-[152px] w-[119px] border-6 border-[#e81c1c]" />
      <div className="pointer-events-none absolute top-[301px] left-[403px] h-[488px] w-[243px] border-6 border-[#e81c1c]" />
      <svg className="pointer-events-none absolute top-[214px] left-[440px] h-[90px] w-[70px]" viewBox="0 0 70 90" aria-hidden="true">
        <path d="M13 0L47 64" stroke="#e81c1c" strokeWidth="6" />
        <path d="M56 88L29 68L56 55Z" fill="#e81c1c" />
      </svg>
    </>
  );
}

function AiFloat() {
  return (
    <div className="absolute right-[34px] bottom-[33px] flex h-20 w-44 items-center rounded-full bg-white shadow-[0_6px_20px_rgba(0,0,0,0.14)]">
      <button type="button" aria-label="AI 편집" className="flex flex-1 justify-center pl-1">
        <svg width="38" height="38" viewBox="0 0 38 38" fill="none" aria-hidden="true">
          <defs>
            <linearGradient id="wand" x1="0" y1="0" x2="1" y2="1"><stop offset="0" stopColor="#9b4dff" /><stop offset="1" stopColor="#2f6bff" /></linearGradient>
          </defs>
          <path d="M5 12L11 5Q13 4 15 6L33 28Q34 30 32 32L28 36Q26 37 24 35L5 15Q4 13 5 12ZM11 17L16 12" stroke="url(#wand)" strokeWidth="3" />
          <path d="M21 0L22.500 4L26 5L22.500 6L21 10L19.500 6L16 5L19.500 4Z" fill="#7a4dff" />
          <path d="M32 7L33.500 11.500L38 13L33.500 14.500L32 19L30.500 14.500L26 13L30.500 11.500Z" fill="#2f7bff" />
          <path d="M5 20L6.500 24L10 25L6.500 26L5 30L3.500 26L0 25L3.500 24Z" fill="#8a4dff" />
        </svg>
      </button>
      <div className="h-12 w-px bg-[#ebebed]" />
      <button type="button" aria-label="AI" className="flex flex-1 justify-center pr-2"><Sparkle size={38} id="spark-b" /></button>
    </div>
  );
}

function Workspace() {
  return (
    <main className="relative flex min-w-0 flex-1 flex-col overflow-hidden">
      <TopRuler />
      <div className="flex min-h-0 flex-1">
        <SideRuler />
        <div className="relative min-w-0 flex-1 overflow-hidden bg-[#ebebf1]">
          <Page />
          <AiFloat />
        </div>
        <div className="w-[22px] shrink-0 bg-white pt-[86px] pl-0.5">
          <div className="h-[814px] w-5 rounded-full bg-[#d1d2d4]" />
        </div>
      </div>
      <div className="h-[25px] shrink-0 border-b border-[#ebebed] bg-white pt-0.5 pr-[381px] pl-[336px]">
        <div className="h-5 rounded-full bg-[#d1d2d4]" />
      </div>
      <div className="flex h-8 shrink-0 items-center bg-[#f7f7f9]">
        <button type="button" aria-label="채우기 색" className="flex h-8 w-[69px] shrink-0 items-center gap-1 bg-white pl-[21px] text-[#434343]">
          <Bucket /><Caret className="text-[#8c8c8c]" />
        </button>
        <div className="flex h-[30px] min-w-0 flex-1 gap-0.5">
          {SWATCHES.map((c) => (
            <button key={c} type="button" aria-label={c} className="min-w-0 flex-1 rounded-sm" style={{ backgroundColor: c }} />
          ))}
        </div>
      </div>
      <ChartToolbar />
      <StylePopup />
      <Callouts />
    </main>
  );
}

/* ---------- status bar ---------- */

const StatusSep = () => <div className="h-11 w-px shrink-0 bg-[#dfe0e5]" />;

function StatusBar() {
  return (
    <footer className="flex h-[61px] shrink-0 items-center overflow-hidden bg-[#f3f4f9] text-[26px] leading-9 whitespace-nowrap text-[#222]">
      <button type="button" aria-label="개요" className="w-[86px] pl-[27px]">
        <Icon size={36} box={36} sw={2}><path d="M2 8V28M34 8V28" /><rect x="8" y="8" width="20" height="20" rx="1" /></Icon>
      </button>
      <StatusSep />
      <div className="relative flex w-64 items-center">
        <select aria-label="페이지" className="w-full appearance-none bg-transparent pl-8 text-[28px]" defaultValue="p1">
          <option value="p1">페이지-1</option>
        </select>
        <Caret className="pointer-events-none absolute right-4 text-[#6e6e6e]" />
      </div>
      <StatusSep />
      <button type="button" aria-label="페이지 추가" className="flex w-20 justify-center">
        <Icon size={24} box={24} sw={2}><path d="M12 1V23M1 12H23" /></Icon>
      </button>
      <StatusSep />
      <button type="button" className="w-[145px] text-center text-[28px] font-bold text-[#0080ff]">페이지-1</button>
      <StatusSep />
      <div className="ml-auto flex items-center">
        <StatusSep />
        <span className="w-[139px] text-center">형태 수: 4</span>
        <StatusSep />
        <span className="w-[163px] text-center">모양 ID: 185</span>
        <StatusSep />
        <button type="button" aria-label="레이어" className="ml-6 flex items-center gap-2.5">
          <Icon size={34} box={34} sw={2}><path d="M17 2L33 12L17 23L1 12ZM4 19L1 21L17 32L33 21L30 19" /></Icon>
          <Caret className="text-[#8c8c8c]" />
        </button>
        <button type="button" className="ml-7 flex items-center gap-4">
          <Icon size={32} sw={2}><path d="M2 9V2H9M23 2H30V9M30 23V30H23M9 30H2V23M11 8H18L22 12V24H11Z" strokeLinecap="butt" /></Icon>
          집중
        </button>
        <button type="button" aria-label="재생" className="ml-6">
          <Icon size={34} box={34} sw={2}><circle cx="17" cy="17" r="15" /><path d="M13 10L23 17L13 24Z" /></Icon>
        </button>
        <div className="ml-6"><StatusSep /></div>
        <button type="button" aria-label="축소" className="ml-[21px] w-5 overflow-hidden">
          <Icon size={24} box={24} sw={2}><path d="M1 12H23" /></Icon>
        </button>
      </div>
    </footer>
  );
}

export default function App() {
  return (
    <div className="flex h-screen flex-col overflow-hidden bg-white font-['Noto_Sans','Noto_Sans_CJK_KR',sans-serif]">
      <TopBar />
      <Ribbon />
      <div className="flex min-h-0 flex-1">
        <Rail />
        <SymbolPanel />
        <Workspace />
      </div>
      <StatusBar />
    </div>
  );
}
